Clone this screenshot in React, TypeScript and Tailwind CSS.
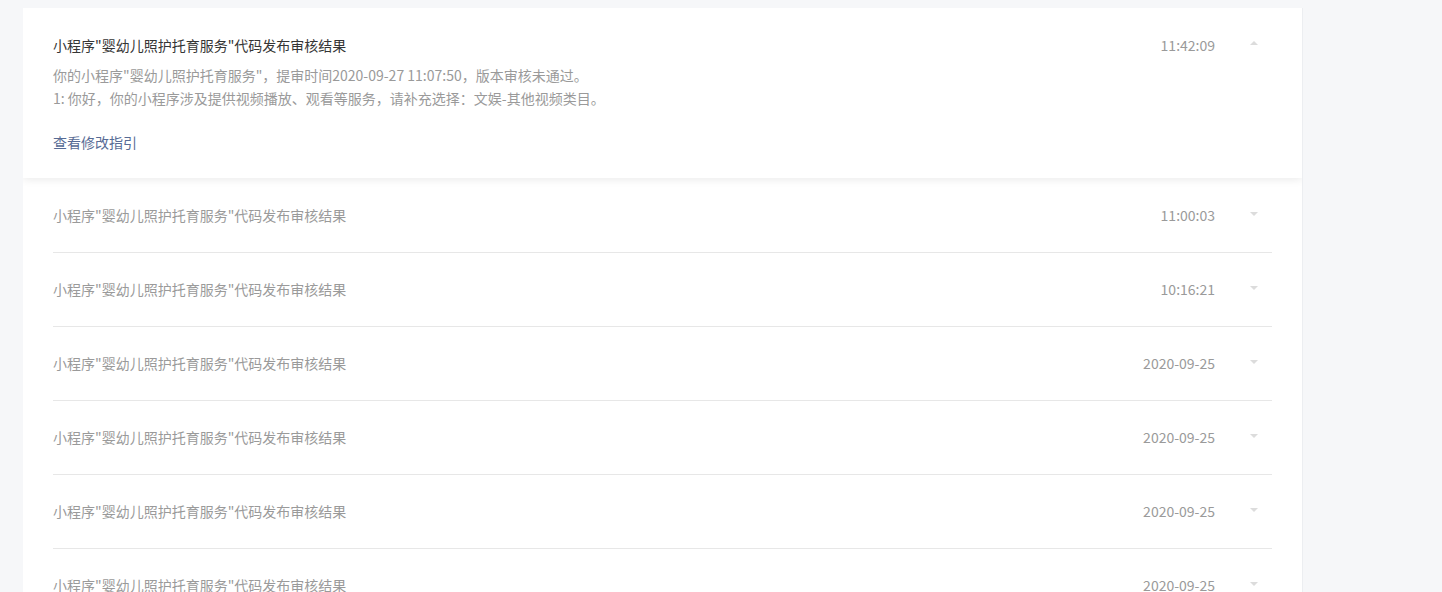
import React from 'react';

const TITLE = '小程序"婴幼儿照护托育服务"代码发布审核结果';

const rows = [
  { time: '11:00:03' },
  { time: '10:16:21' },
  { time: '2020-09-25' },
  { time: '2020-09-25' },
  { time: '2020-09-25' },
  { time: '2020-09-25' },
];

const Arrow = ({ up }: { up?: boolean }) => (
  <span
    className={
      up
        ? 'block w-0 h-0 border-x-[4px] border-x-transparent border-b-[4px] border-b-[#dcdcdc]'
        : 'block w-0 h-0 border-x-[4px] border-x-transparent border-t-[4px] border-t-[#dcdcdc]'
    }
  />
);

export default function App() {
  return (
    <div
      className="min-h-[592px] bg-[#f6f7f9] pt-2 pl-[23px] text-[14px]"
      style={{ fontFamily: '"Noto Sans CJK SC", "Noto Sans", sans-serif' }}
    >
      <div className="w-[1280px] bg-white border-r border-[#eceef1] h-[584px] overflow-hidden">
        {/* expanded message */}
        <div className="relative z-10 h-[170px] bg-white shadow-[0_2px_8px_rgba(0,0,0,0.08)] px-[30px] pt-[26px]">
          <div className="flex items-center h-[22px]">
            <span className="flex-1 text-[#353535]">{TITLE}</span>
            <span className="text-[#9a9a9a] mr-[21px]">11:42:09</span>
            <span className="w-[36px] flex justify-center -mt-[4px]">
              <Arrow up />
            </span>
          </div>
          <div className="mt-[8px] text-[#9a9a9a] leading-[23px]">
            <p>你的小程序"婴幼儿照护托育服务"，提审时间2020-09-27 11:07:50，版本审核未通过。</p>
            <p>1: 你好，你的小程序涉及提供视频播放、观看等服务，请补充选择：文娱-其他视频类目。</p>
          </div>
          <a className="block mt-[21px] text-[#576b95] leading-[22px] cursor-pointer">查看修改指引</a>
        </div>

        {/* collapsed list */}
        <div className="px-[30px] mt-[1px]">
          {rows.map((r, i) => (
            <div key={i} className="flex items-center h-[74px] border-b border-[#e7e7e7]">
              <span className="flex-1 text-[#9a9a9a]">{TITLE}</span>
              <span className="text-[#9a9a9a] mr-[21px]">{r.time}</span>
              <span className="w-[36px] flex justify-center -mt-[4px]">
                <Arrow />
              </span>
            </div>
          ))}
        </div>
      </div>
    </div>
  );
}
